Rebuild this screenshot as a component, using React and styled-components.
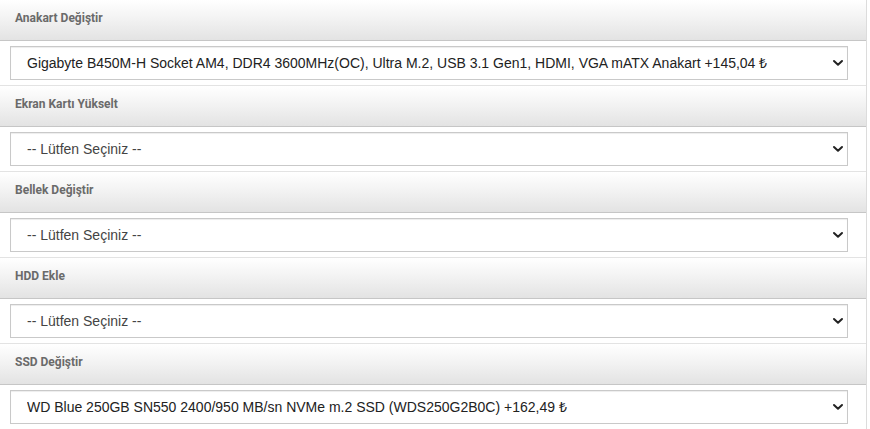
import React from "react";
import styled, { createGlobalStyle } from "styled-components";

const Global = createGlobalStyle`
  html, body { margin: 0; padding: 0; background: #fff; }
  * { box-sizing: border-box; }
`;

const Panel = styled.div`
  width: 867px;
  border-right: 1px solid #dcdcdc;
  display: flex;
  flex-direction: column;
`;

const Section = styled.section`
  display: flex;
  flex-direction: column;
`;

const Header = styled.div`
  height: 41px;
  padding: 10px 15px 0;
  background: linear-gradient(to bottom, #ffffff 0%, #f3f3f3 45%, #e3e3e3 100%);
  border-bottom: 1px solid #c6c6c6;
  font-family: Roboto, "Liberation Sans", sans-serif;
  font-weight: 700;
  font-size: 12px;
  line-height: 16px;
  color: #6a6a6a;
`;

const Body = styled.div`
  padding: 5px 18px 5px 10px;
  border-bottom: 1px solid #e3e3e3;
`;

const SelectWrap = styled.div`
  position: relative;
  height: 34px;
`;

const Select = styled.select`
  appearance: none;
  -webkit-appearance: none;
  width: 100%;
  height: 34px;
  padding: 0 40px 0 16px;
  border: 1px solid #c9c9c9;
  border-radius: 0;
  background: #fff;
  box-shadow: inset 0 1px 1px rgba(0, 0, 0, 0.075);
  font-family: "Liberation Sans", Arial, sans-serif;
  font-size: 14px;
  color: ${(p) => (p.$empty ? "#444" : "#222")};
  outline: none;
`;

const Chevron = styled.svg`
  position: absolute;
  right: 4px;
  top: 13px;
  width: 12px;
  height: 8px;
  pointer-events: none;
`;

const sections = [
  {
    title: "Anakart Değiştir",
    value:
      "Gigabyte B450M-H Socket AM4, DDR4 3600MHz(OC), Ultra M.2, USB 3.1 Gen1, HDMI, VGA mATX Anakart +145,04 ₺",
  },
  { title: "Ekran Kartı Yükselt", value: null },
  { title: "Bellek Değiştir", value: null },
  { title: "HDD Ekle", value: null },
  {
    title: "SSD Değiştir",
    value: "WD Blue 250GB SN550 2400/950 MB/sn NVMe m.2 SSD (WDS250G2B0C) +162,49 ₺",
  },
];

export default function App() {
  return (
    <>
      <Global />
      <Panel>
        {sections.map((s) => (
          <Section key={s.title}>
            <Header>{s.title}</Header>
            <Body>
              <SelectWrap>
                <Select $empty={!s.value} defaultValue={s.value || ""}>
                  <option value="">-- Lütfen Seçiniz --</option>
                  {s.value && <option value={s.value}>{s.value}</option>}
                </Select>
                <Chevron viewBox="0 0 12 8">
                  <path
                    d="M2 2 L6 5.8 L10 2"
                    fill="none"
                    stroke="#222"
                    strokeWidth="2"
                    strokeLinecap="round"
                    strokeLinejoin="round"
                  />
                </Chevron>
              </SelectWrap>
            </Body>
          </Section>
        ))}
      </Panel>
    </>
  );
}
